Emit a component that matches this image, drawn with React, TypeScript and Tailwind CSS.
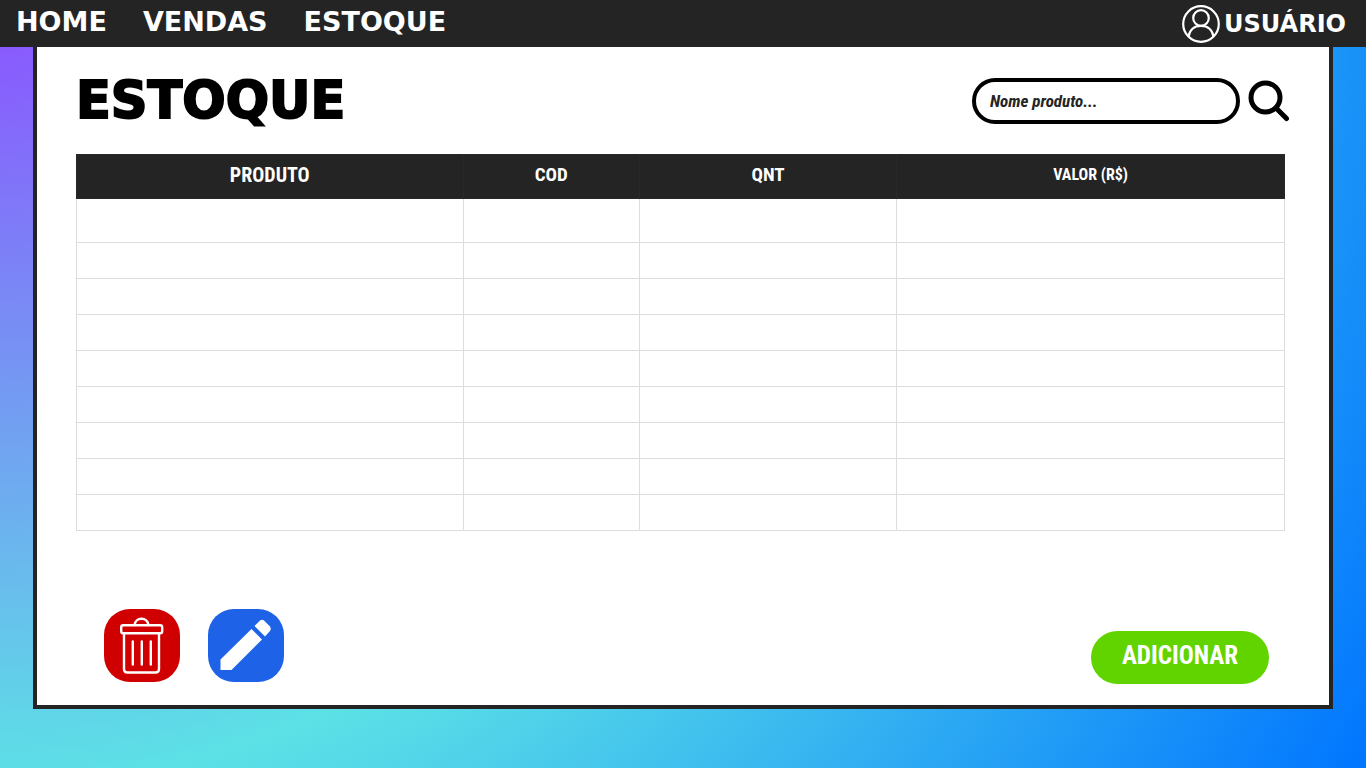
import React from "react";

const wide = "font-['DejaVu_Sans',sans-serif] font-bold";
const narrow = "font-['Roboto_Condensed','Roboto',sans-serif] font-bold";

const columns = [
  { label: "PRODUTO", width: "w-[32%]", text: "text-[20px]" },
  { label: "COD", width: "w-[14.6%]", text: "text-[19px]" },
  { label: "QNT", width: "w-[21.3%]", text: "text-[19px]" },
  { label: "VALOR (R$)", width: "w-[32.1%]", text: "text-[16px]" },
];

const rows = [0, 1, 2, 3, 4, 5, 6, 7, 8];

function UserIcon() {
  return (
    <svg viewBox="0 0 38 38" className="size-[38px]" fill="none" stroke="currentColor" strokeWidth="2.2" aria-hidden="true">
      <circle cx="19" cy="19" r="17.8" />
      <circle cx="19" cy="13" r="7.8" />
      <path d="M6.500 31.500C7.500 25 12 20.800 19 20.800S30.500 25 31.500 31.500" />
    </svg>
  );
}

function SearchIcon() {
  return (
    <svg viewBox="0 0 42 42" className="size-[42px]" fill="none" stroke="currentColor" strokeLinecap="round" aria-hidden="true">
      <circle cx="17.500" cy="17.500" r="14.500" strokeWidth="5" />
      <path d="M28 28L38.500 38.500" strokeWidth="5" />
    </svg>
  );
}

function TrashIcon() {
  return (
    <svg viewBox="0 0 76 73" className="h-[73px] w-[76px]" fill="none" stroke="currentColor" strokeWidth="2.4" strokeLinecap="round" aria-hidden="true">
      <path d="M30.500 16C31 12 34 9.800 37.500 9.800S44 12 44.500 16" />
      <rect x="17.200" y="16.200" width="41" height="8" rx="2" />
      <path d="M20 25V60Q20 63.500 23.500 63.500H51.500Q55 63.500 55 60V25" />
      <path d="M28.800 32.500V55.500M37.800 32.500V55.500M46.800 32.500V55.500" />
    </svg>
  );
}

function PencilIcon() {
  return (
    <svg viewBox="0 0 76 73" className="h-[73px] w-[76px]" fill="currentColor" aria-hidden="true">
      <path d="M12.500 61V50.500L43.500 20L54 30.500L23.500 61Z" />
      <path d="M46.500 17L52 11.500Q54 10 56 11.500L62 17.500Q63.500 19.500 62 22L57 27.500Z" />
    </svg>
  );
}

export default function App() {
  return (
    <div className="flex min-h-screen flex-col bg-[radial-gradient(circle_farthest-corner_at_0_0,#8c52ff_0%,#5ce1e6_50%,#0075ff_100%)]">
      <header className="flex h-[47px] items-center justify-between bg-[#242424] pr-5 pl-4 text-white">
        <nav className={`flex gap-9 pb-1 text-[27px] leading-8 ${wide}`}>
          <a href="#home">HOME</a>
          <a href="#vendas">VENDAS</a>
          <a href="#estoque">ESTOQUE</a>
        </nav>
        <a href="#usuario" className={`flex items-center gap-1 text-[24px] leading-8 ${wide}`}>
          <UserIcon />
          USUÁRIO
        </a>
      </header>

      <main className="mx-[33px] mb-[59px] flex flex-1 flex-col border-x-4 border-b-4 border-[#242424] bg-white pt-[31px] pb-[23px]">
        <div className="flex items-center justify-between pr-[39px] pl-[39px]">
          <h1 className={`text-[51px] leading-[46px] [-webkit-text-stroke:2px_black] ${wide}`}>ESTOQUE</h1>
          <form className="flex items-center gap-2" onSubmit={(event) => event.preventDefault()}>
            <input
              type="search"
              aria-label="Nome produto"
              placeholder="Nome produto..."
              className={`h-[46px] w-[268px] rounded-full border-4 border-black bg-white px-[14px] text-[17px] italic text-[#242424] placeholder:text-[#242424] placeholder:opacity-100 ${narrow}`}
            />
            <button type="submit" aria-label="Buscar">
              <SearchIcon />
            </button>
          </form>
        </div>

        <div className="mt-[30px] pr-11 pl-[39px]">
          <table className="w-full table-fixed border-collapse">
            <thead>
              <tr className="h-11 bg-[#242424] text-white">
                {columns.map((column) => (
                  <th key={column.label} scope="col" className={`border border-[#282828] p-0 pb-1 leading-6 ${column.width} ${column.text} ${narrow}`}>
                    {column.label}
                  </th>
                ))}
              </tr>
            </thead>
            <tbody>
              {rows.map((row) => (
                <tr key={row} className="h-9 first:h-11">
                  {columns.map((column) => (
                    <td key={column.label} className="border border-[#dddddd] p-0" />
                  ))}
                </tr>
              ))}
            </tbody>
          </table>
        </div>

        <div className="mt-auto flex items-end justify-between pr-[60px] pl-[67px]">
          <div className="flex gap-7">
            <button type="button" aria-label="Excluir" className="rounded-[26px] bg-[#d10000] text-white">
              <TrashIcon />
            </button>
            <button type="button" aria-label="Editar" className="rounded-[26px] bg-[#1e62e8] text-white">
              <PencilIcon />
            </button>
          </div>
          <button type="button" className={`-mb-0.5 h-[53px] w-[178px] rounded-full bg-[#61d400] pb-1 text-[25px] text-white ${narrow}`}>
            ADICIONAR
          </button>
        </div>
      </main>
    </div>
  );
}
